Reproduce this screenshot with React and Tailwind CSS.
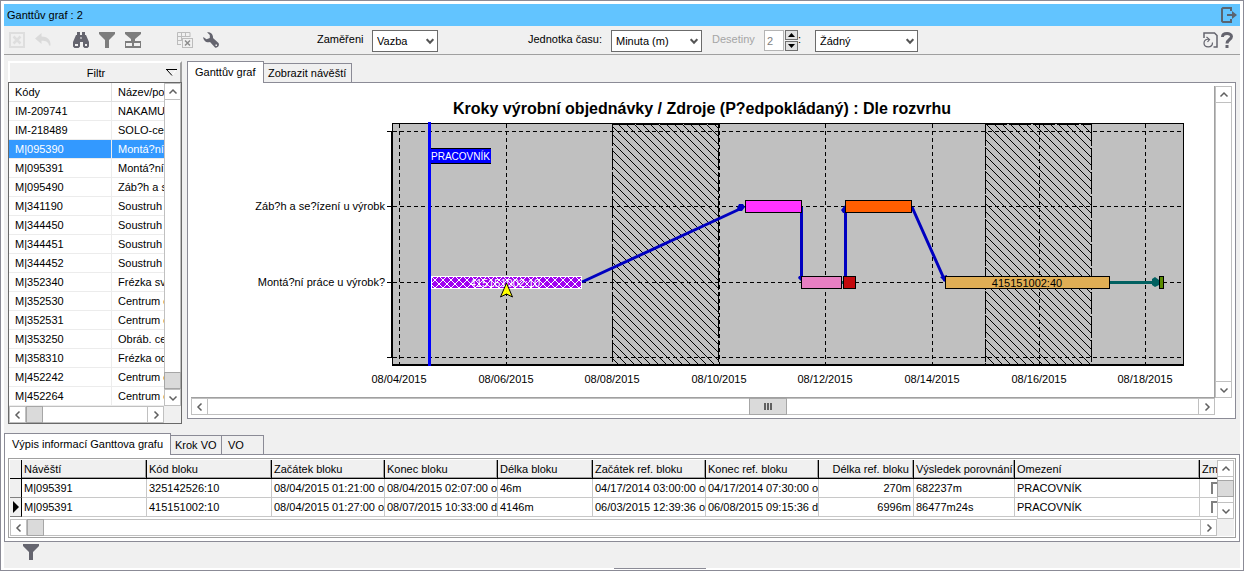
import React, { useState } from 'react';

const codes = [
  ['IM-209741', 'NAKAMURA'],
  ['IM-218489', 'SOLO-centrum'],
  ['M|095390', 'Montá?ní práce'],
  ['M|095391', 'Montá?ní práce'],
  ['M|095490', 'Záb?h a se?ízení'],
  ['M|341190', 'Soustruh'],
  ['M|344450', 'Soustruh'],
  ['M|344451', 'Soustruh'],
  ['M|344452', 'Soustruh'],
  ['M|352340', 'Frézka svislá'],
  ['M|352530', 'Centrum obráb.'],
  ['M|352531', 'Centrum obráb.'],
  ['M|353250', 'Obráb. centrum'],
  ['M|358310', 'Frézka odval.'],
  ['M|452242', 'Centrum obráb.'],
  ['M|452264', 'Centrum obráb.'],
];

const columns = [
  { label: 'Návěští', width: 'w-[125px]' },
  { label: 'Kód bloku', width: 'w-[125px]' },
  { label: 'Začátek bloku', width: 'w-[113px]' },
  { label: 'Konec bloku', width: 'w-[113px]' },
  { label: 'Délka bloku', width: 'w-[95px]' },
  { label: 'Začátek ref. bloku', width: 'w-[113px]' },
  { label: 'Konec ref. bloku', width: 'w-[113px]' },
  { label: 'Délka ref. bloku', width: 'w-[95px]', right: true },
  { label: 'Výsledek porovnání', width: 'w-[101px]' },
  { label: 'Omezení', width: 'w-[185px]' },
];

const blocks = [
  ['M|095391', '325142526:10', '08/04/2015 01:21:00 od', '08/04/2015 02:07:00 od', '46m', '04/17/2014 03:00:00 od', '04/17/2014 07:30:00 od', '270m', '682237m', 'PRACOVNÍK'],
  ['M|095391', '415151002:10', '08/04/2015 01:27:00 od', '08/07/2015 10:33:00 do', '4146m', '06/03/2015 12:39:36 od', '06/08/2015 09:15:36 do', '6996m', '86477m24s', 'PRACOVNÍK'],
];

const days = [
  { x: 208, label: '08/04/2015' },
  { x: 315, label: '08/06/2015' },
  { x: 421, label: '08/08/2015' },
  { x: 528, label: '08/10/2015' },
  { x: 634, label: '08/12/2015' },
  { x: 741, label: '08/14/2015' },
  { x: 848, label: '08/16/2015' },
  { x: 954, label: '08/18/2015' },
];

const bars = [
  { x: 554, y: 114, w: 56, fill: '#ff33ff' },
  { x: 610, y: 190, w: 40, fill: '#e87fc3' },
  { x: 652, y: 190, w: 12, fill: '#c40a0e' },
  { x: 654, y: 114, w: 66, fill: '#ff5e00' },
  { x: 754, y: 190, w: 164, fill: '#e0ae55' },
  { x: 968, y: 190, w: 4, fill: '#5a8c00' },
];

const chevrons = {
  up: 'M1.5 6.5L5 3L8.5 6.5',
  down: 'M1.5 3.5L5 7L8.5 3.5',
  left: 'M6.5 1.5L3 5L6.5 8.5',
  right: 'M3.5 1.5L7 5L3.5 8.5',
};

function ScrollButton({ dir }) {
  return (
    <button aria-label={dir} className="flex size-[17px] shrink-0 items-center justify-center border border-[#c0c0c0] bg-white">
      <svg width="10" height="10" viewBox="0 0 10 10" fill="none" stroke="#606060" strokeWidth="1.5">
        <path d={chevrons[dir]} />
      </svg>
    </button>
  );
}

function HScroll({ children }) {
  return (
    <div className="flex h-[17px] min-w-0 flex-1 border-y border-[#c0c0c0] bg-white">
      <div className="-my-px"><ScrollButton dir="left" /></div>
      <div className="-my-px flex min-w-0 flex-1">{children}</div>
      <div className="-my-px"><ScrollButton dir="right" /></div>
    </div>
  );
}

function VScroll({ children }) {
  return (
    <div className="flex w-[17px] shrink-0 flex-col border-x border-[#c0c0c0] bg-white">
      <div className="-mx-px"><ScrollButton dir="up" /></div>
      <div className="-mx-px flex flex-1 flex-col">{children}</div>
      <div className="-mx-px"><ScrollButton dir="down" /></div>
    </div>
  );
}

function Thumb({ className = 'size-[17px]', children }) {
  return <div className={`flex shrink-0 items-center justify-center border border-[#a6a6a6] bg-[#dadada] ${className}`}>{children}</div>;
}

function Combo({ id, options, className }) {
  return (
    <div className={`relative h-[22px] ${className}`}>
      <select id={id} className="h-full w-full appearance-none border border-[#6b6b6b] bg-white pl-1 text-[11px] outline-none">
        {options.map((o) => <option key={o}>{o}</option>)}
      </select>
      <svg className="pointer-events-none absolute top-2 right-1" width="8" height="7" viewBox="0 0 8 7" fill="none" stroke="#555" strokeWidth="2">
        <path d="M0.7 1.2L4 4.7L7.3 1.2" />
      </svg>
    </div>
  );
}

function Tab({ active, onClick, className = '', children }) {
  return (
    <button
      onClick={onClick}
      className={`border-t border-r border-[#8b8b96] text-left whitespace-nowrap ${active ? 'relative z-10 -mb-px h-[22px] border-l bg-white pb-[2px]' : 'h-[19px] bg-[#f0f0f0]'} ${className}`}
    >
      {children}
    </button>
  );
}

function Funnel({ color }) {
  return (
    <svg width="16" height="16" viewBox="0 0 16 16" fill={color}>
      <path d="M0 0h16v2l-6 6v8H6V8L0 2z" />
    </svg>
  );
}

function Toolbar() {
  return (
    <div className="flex h-[29px] items-start border-b border-[#a0a0a0]">
      <div className="flex w-[313px] gap-[10px] pt-[6px] pl-[5px]">
        <button aria-label="Zavřít">
          <svg width="16" height="16" viewBox="0 0 16 16" fill="none" stroke="#dedede" strokeWidth="2">
            <rect x="1" y="1" width="14" height="14" />
            <path d="M4.5 4.5l7 7M11.5 4.5l-7 7" strokeWidth="2.5" />
          </svg>
        </button>
        <button aria-label="Zpět">
          <svg width="16" height="16" viewBox="0 0 16 16" fill="#dadada">
            <path d="M0 6.5L6.5 1V4.5C12 4.5 16 7.5 15.5 13.5L14 13.5C13.5 10 11 8.8 6.5 8.8V12z" />
          </svg>
        </button>
        <button aria-label="Hledat" className="ml-3">
          <svg width="16" height="16" viewBox="0 0 16 16" fill="#64646e">
            <path d="M4 0h3v3h2V0h3v3h1l3 7v4.500l-1.500 1.500h-3l-1.500-1.500V10H7v4.500L5.500 16h-4L0 14.500V10l3-7h1z" />
            <path d="M7.500 5h1v2h-1zM2 12h3v2H2zM12 12h2v2h-2z" fill="#f0f0f0" />
          </svg>
        </button>
        <button aria-label="Filtr"><Funnel color="#7d7d7d" /></button>
        <button aria-label="Filtr sloupců">
          <svg width="16" height="16" viewBox="0 0 16 16" fill="#7d7d7d">
            <path d="M0 0h16v2l-6 5v2h6v7H0V9h6V7L0 2z" />
            <path d="M1 11h6v3H1zM9 11h6v3H9z" fill="#f0f0f0" />
          </svg>
        </button>
        <button aria-label="Export tabulky" className="ml-[26px]">
          <svg width="16" height="16" viewBox="0 0 16 16" fill="none" stroke="#bcbcbc">
            <path d="M0.500 13V0.500H13V5M0.500 4.500H13M0.500 8.500H5M0.500 12.500H4M4.500 0v8M8.500 0v5" />
            <rect x="5.500" y="6.500" width="10" height="9" />
            <path d="M8 8.500l5 5M13 8.500l-5 5" stroke="#8c8c8c" strokeWidth="1.500" />
          </svg>
        </button>
        <button aria-label="Nastavení">
          <svg width="16" height="16" viewBox="0 0 16 16" fill="#64646e">
            <path d="M4 0.300C7 -0.300 10.500 2 10 6L15.500 11C17 13.500 14.500 16.500 12 15.500L7 10C3 11 0 8 0.300 5L3.500 7.200L6.800 6L6.800 3z" />
            <rect x="12.500" y="12.500" width="1.500" height="1.500" fill="#f0f0f0" />
          </svg>
        </button>
      </div>
      <div className="flex flex-1 items-start pt-[4px]">
        <label htmlFor="focus" className="w-[55px] pt-[2px]">Zaměřeni</label>
        <Combo id="focus" options={['Vazba']} className="w-[66px]" />
        <label htmlFor="unit" className="ml-[90px] w-[83px] pt-[2px]">Jednotka času:</label>
        <Combo id="unit" options={['Minuta (m)']} className="w-[91px]" />
        <label htmlFor="decimals" className="ml-[10px] w-[52px] pt-[2px] text-[#a5a5a5]">Desetiny</label>
        <input id="decimals" disabled defaultValue="2" className="h-[21px] w-[20px] border border-[#b4b4b4] bg-white pl-[2px] text-[#7d7d7d]" />
        <div className="ml-px flex w-[13px] flex-col gap-px">
          <button aria-label="Více" className="flex h-[10px] items-center justify-center border border-[#707070] bg-[#e1e1e1]">
            <svg width="7" height="4" viewBox="0 0 7 4"><path d="M0 4L3.500 0L7 4z" /></svg>
          </button>
          <button aria-label="Méně" className="flex h-[10px] items-center justify-center border border-[#707070] bg-[#e1e1e1]">
            <svg width="7" height="4" viewBox="0 0 7 4"><path d="M0 0L3.500 4L7 0z" /></svg>
          </button>
        </div>
        <label htmlFor="rounding" className="w-[17px] pt-[2px]">:</label>
        <Combo id="rounding" options={['Žádný']} className="w-[103px]" />
      </div>
      <div className="flex gap-[3px] pt-[6px] pr-[7px]">
        <button aria-label="Obnovit">
          <svg width="15" height="16" viewBox="0 0 15 16" fill="none" stroke="#64646e" strokeWidth="1.500">
            <path d="M1 6V1H11.500L14 3.500V15H10.500" />
            <path d="M3.500 5L6.500 7.500L4.500 10M6.500 7.500C3 6.500 1 8.500 1 11C1 16 9.500 16.500 9.500 10.500" strokeWidth="1.200" />
          </svg>
        </button>
        <button aria-label="Nápověda">
          <svg width="12" height="16" viewBox="0 0 12 16" fill="none" stroke="#64646e" strokeWidth="3">
            <path d="M1.500 5C1.500 0.500 10.500 0.500 10.500 4.500C10.500 7.500 6 7.500 6 11.500M6 13V16" />
          </svg>
        </button>
      </div>
    </div>
  );
}

function FilterPanel() {
  const [selected, setSelected] = useState(2);

  return (
    <div className="w-[174px] shrink-0">
      <button className="flex h-[21px] w-full items-center border-t-2 border-r-2 border-l-2 border-t-white border-r-[#a0a0a0] border-l-white">
        <span className="flex-1 pl-2 text-center">Filtr</span>
        <svg className="mr-[3px] -ml-2" width="11" height="8" viewBox="0 0 11 8" fill="none" stroke="#000">
          <path d="M10 1L6 6.500" stroke="#fff" />
          <path d="M0 0.500H11M1 1L6 6.500" />
        </svg>
      </button>
      <div className="border border-[#696969] bg-white">
        <div className="flex">
          <div className="min-w-0 flex-1 overflow-hidden">
            <table className="w-[240px] table-fixed border-separate border-spacing-0 text-left">
              <thead>
                <tr className="h-[19px]">
                  <th className="w-[103px] border-r border-b border-[#e0e0e0] p-0 pl-[6px] font-normal">Kódy</th>
                  <th className="border-b border-[#e0e0e0] p-0 pl-[6px] font-normal">Název/popis</th>
                </tr>
              </thead>
              <tbody>
                {codes.map(([code, name], i) => (
                  <tr key={code} onClick={() => setSelected(i)} className={`h-[19px] ${i === selected ? 'bg-[#3399ff] text-white' : ''}`}>
                    <td className="border-r border-b border-[#ececec] p-0 pl-[6px]">{code}</td>
                    <td className="border-b border-[#ececec] p-0 pl-[6px] whitespace-nowrap">{name}</td>
                  </tr>
                ))}
              </tbody>
            </table>
          </div>
          <VScroll>
            <div className="flex-1" />
            <Thumb />
          </VScroll>
        </div>
        <div className="flex bg-[#f0f0f0]">
          <HScroll><Thumb /></HScroll>
          <div className="w-[17px]" />
        </div>
      </div>
    </div>
  );
}

function Gantt() {
  return (
    <svg width="1022" height="311" viewBox="0 0 1022 311" className="block font-['Liberation_Sans',Arial,sans-serif] text-[11px]">
      <defs>
        <pattern id="hatch" x="5" width="8" height="8" patternUnits="userSpaceOnUse">
          <path d="M-1 -1L9 9M-1 7L1 9M7 -1L9 1" stroke="#000" />
        </pattern>
        <pattern id="cross" x="240" y="190" width="8" height="8" patternUnits="userSpaceOnUse">
          <path d="M-1 -1L9 9M-1 9L9 -1" stroke="#fff" />
        </pattern>
      </defs>

      <text x="511" y="28" textAnchor="middle" className="text-[16px] font-bold">
        Kroky výrobní objednávky / Zdroje (P?edpokládaný) : Dle rozvrhu
      </text>

      {/* Plot area */}
      <rect x="201" y="37" width="792" height="243" fill="#c0c0c0" />
      {[421, 794].map((x) => (
        <g key={x} shapeRendering="crispEdges" stroke="#000">
          <rect x={x} y="38" width="107" height="240" fill="url(#hatch)" stroke="none" shapeRendering="auto" />
          <path d={`M${x + 0.5} 38V279M${x + 106.5} 38V279M${x} 38.5H${x + 107}`} strokeDasharray="22 2" />
        </g>
      ))}
      <g shapeRendering="crispEdges" stroke="#000" fill="none">
        <path d="M201 37.500H993M992.500 37V280M201.500 37V280" />
        <path d="M201 279H993M201 45V272" strokeWidth="2" />
        <path d="M196 45.500H201M196 120.500H201M196 196.500H201M196 271.500H201" />
        <path d="M202 45.500H992M202 120.500H992M202 196.500H992M202 271.500H992" strokeDasharray="4 3" />
        {days.map(({ x }) => x !== 421 && <path key={x} d={`M${x + 0.5} 38V278`} strokeDasharray="4 3" />)}
      </g>

      {/* Axis labels */}
      {days.map(({ x, label }) => <text key={x} x={x} y="297" textAnchor="middle">{label}</text>)}
      <text x="194" y="124" textAnchor="end">Záb?h a se?ízení u výrobk</text>
      <text x="194" y="200" textAnchor="end">Montá?ní práce u výrobk?</text>

      {/* Selected block */}
      <rect x="240.500" y="190.500" width="150" height="12" fill="#a000f0" />
      <rect x="240.500" y="190.500" width="150" height="12" fill="url(#cross)" stroke="#fff" />
      <text x="314" y="201" textAnchor="middle" fill="#fff">415151002:10</text>

      {/* Links */}
      <g stroke="#0000c0" strokeWidth="3" fill="none">
        <path d="M391 196L551 122M610.500 121V193M654.500 196V121M721 121L754 195" />
      </g>
      <path d="M651 196.500H653M919 196.500H967" stroke="#006060" strokeWidth="3" />
      <path d="M548 118h4l2 3l-3 4h-3l-2-3zM608 190h4v7l-5-5zM655 118v9h-3l-2-3zM749 191l7-2v9z" fill="#0000c0" />
      <path d="M961 193l3-2l4 3v5l-4 2l-3-2z" fill="#006060" />
      {bars.map((b) => (
        <rect key={b.x} x={b.x + 0.5} y={b.y + 0.5} width={b.w} height="12" fill={b.fill} stroke="#000" />
      ))}
      <text x="836" y="201" textAnchor="middle">415151002:40</text>

      {/* Constraint marker */}
      <rect x="237" y="36" width="3" height="244" fill="#0000ff" />
      <rect x="239" y="62" width="61" height="16" fill="#0000ff" />
      <path d="M240 62.500H300M240 77.500H300" stroke="#000" />
      <text x="240" y="74" fill="#fff" className="text-[10px]">PRACOVNÍK</text>

      <path d="M315.500 197L321.500 211L315.500 208L309.500 211z" fill="#ffff00" stroke="#000" />
    </svg>
  );
}

function BlockTable() {
  return (
    <div className="border border-[#a0a0a0] p-px">
      <div className="flex">
        <div className="min-w-0 flex-1 overflow-hidden pb-[2px]">
          <table className="w-[1250px] table-fixed border-separate border-spacing-0 text-left">
            <thead>
              <tr className="h-[19px] bg-[#f0f0f0]">
                <th className="w-[12px] border-r border-b border-black p-0" />
                {columns.map((c) => (
                  <th key={c.label} className={`border-r border-b border-black p-0 pl-[2px] font-normal whitespace-nowrap shadow-[inset_-1px_-1px_0_#a0a0a0] ${c.right ? 'pr-1 text-right' : ''} ${c.width}`}>
                    {c.label}
                  </th>
                ))}
                <th className="border-b border-black p-0 pl-[2px] font-normal shadow-[inset_-1px_-1px_0_#a0a0a0]">Změna</th>
              </tr>
            </thead>
            <tbody>
              {blocks.map((row, i) => (
                <tr key={row[1]} className="h-[19px]">
                  <td className="border-r border-b border-r-black border-b-[#808080] bg-[#f0f0f0] p-0">
                    {i === 1 && (
                      <svg className="ml-[3px]" width="6" height="12" viewBox="0 0 6 12"><path d="M0 0L6 6L0 12z" /></svg>
                    )}
                  </td>
                  {row.map((cell, j) => (
                    <td key={j} className={`overflow-hidden border-r border-b border-[#c8c8c8] p-0 pl-[2px] whitespace-nowrap ${columns[j].right ? 'pr-[2px] text-right' : ''}`}>
                      {cell}
                    </td>
                  ))}
                  <td className="border-b border-[#c8c8c8] p-0 pl-[11px]">
                    <input type="checkbox" aria-label="Změna" className="block size-[12px] appearance-none border-t-2 border-l-2 border-[#808080] bg-white" />
                  </td>
                </tr>
              ))}
            </tbody>
          </table>
        </div>
        <VScroll>
          <div className="h-[3px]" />
          <Thumb />
        </VScroll>
      </div>
      <div className="flex bg-[#f0f0f0]">
        <HScroll><Thumb /></HScroll>
        <div className="w-[17px]" />
      </div>
    </div>
  );
}

export default function App() {
  const [chartTab, setChartTab] = useState(0);
  const [infoTab, setInfoTab] = useState(0);

  return (
    <div className="flex min-h-screen flex-col border border-[#8b8b96] bg-white px-[3px] pt-[3px] pb-[2px] font-['Liberation_Sans',Arial,sans-serif] text-[11px] leading-[14px] text-black">
      {/* Title bar */}
      <div className="flex h-[22px] items-center justify-between bg-[#62c4ff] pr-[3px] pl-[3px]">
        <h1>Ganttův graf : 2</h1>
        <button aria-label="Konec">
          <svg width="16" height="16" viewBox="0 0 16 16" fill="none" stroke="#5a6470" strokeWidth="2">
            <path d="M10 4V1H2L1 2V14L2 15H10V12M6 8H13" />
            <path d="M11 4L16 8L11 12z" fill="#5a6470" stroke="none" />
          </svg>
        </button>
      </div>

      <div className="flex flex-1 flex-col bg-[#f0f0f0]">
        <Toolbar />

        <div className="flex items-start gap-[5px] pt-[6px] pr-1 pl-1">
          <FilterPanel />
          <div className="min-w-0 flex-1">
            <div className="flex h-[21px] items-end">
              <Tab active={chartTab === 0} onClick={() => setChartTab(0)} className="w-[77px] pl-[7px]">Ganttův graf</Tab>
              <Tab active={chartTab === 1} onClick={() => setChartTab(1)} className="w-[88px] pl-1">Zobrazit návěští</Tab>
            </div>
            <div className="border border-[#8b8b96] bg-white p-[3px]">
              <div className="flex">
                <div className="min-w-0 flex-1 overflow-hidden border-r border-b border-[#a0a0a0]">
                  <Gantt />
                </div>
                <VScroll />
              </div>
              <div className="flex">
                <HScroll>
                  <div className="flex flex-1 justify-center pl-[130px]">
                    <Thumb className="h-[17px] w-[38px] gap-px">
                      <span className="h-[7px] w-[2px] bg-[#606060]" />
                      <span className="h-[7px] w-[2px] bg-[#606060]" />
                      <span className="h-[7px] w-[2px] bg-[#606060]" />
                    </Thumb>
                  </div>
                </HScroll>
                <div className="w-[17px]" />
              </div>
            </div>
          </div>
        </div>

        <div className="mt-[9px]">
          <div className="flex h-[21px] items-end">
            <Tab active={infoTab === 0} onClick={() => setInfoTab(0)} className="w-[167px] pl-[7px]">Výpis informací Ganttova grafu</Tab>
            <Tab active={infoTab === 1} onClick={() => setInfoTab(1)} className="w-[51px] pl-1">Krok VO</Tab>
            <Tab active={infoTab === 2} onClick={() => setInfoTab(2)} className="w-[42px] pl-[6px]">VO</Tab>
          </div>
          <div className="border border-[#8b8b96] bg-white p-[3px]">
            <BlockTable />
          </div>
        </div>

        <div className="flex pt-[2px] pl-[19px]">
          <button aria-label="Filtr"><Funnel color="#64646e" /></button>
        </div>
      </div>
      <div className="-mb-[2px] ml-[610px] h-[2px] w-[92px] border-t border-[#8b8b96] bg-white" />
    </div>
  );
}
